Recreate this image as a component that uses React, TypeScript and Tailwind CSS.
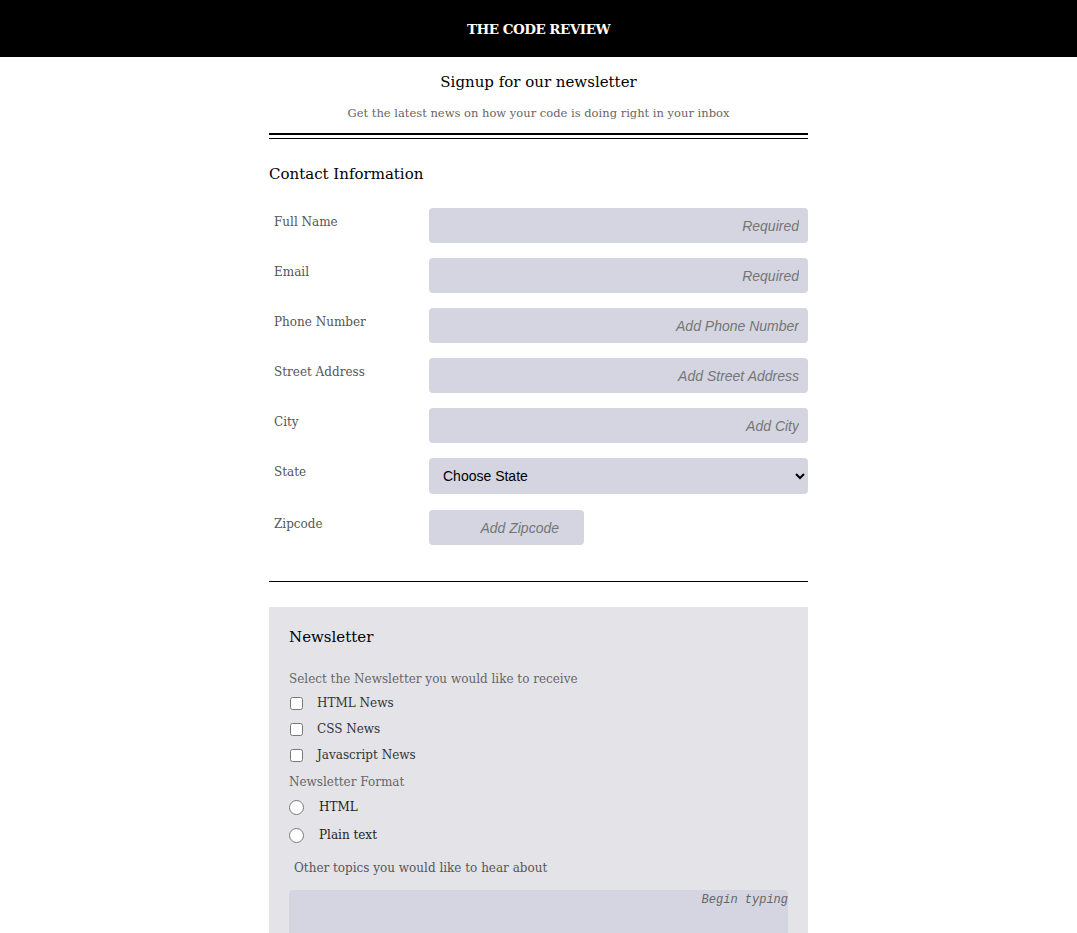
import React from 'react';

const fields = [
  { label: 'Full Name', placeholder: 'Required', type: 'text' },
  { label: 'Email', placeholder: 'Required', type: 'email' },
  { label: 'Phone Number', placeholder: 'Add Phone Number', type: 'tel' },
  { label: 'Street Address', placeholder: 'Add Street Address', type: 'text' },
  { label: 'City', placeholder: 'Add City', type: 'text' },
];

export default function App() {
  return (
    <div className="min-h-screen bg-white font-['DejaVu_Serif',serif]">
      <header className="h-[57px] bg-black flex items-center justify-center pt-[2px]">
        <h1 className="text-white text-[13.5px] font-bold tracking-[-0.5px]">THE CODE REVIEW</h1>
      </header>

      <main className="w-[539px] mx-auto">
        <div className="text-center pt-[14px]">
          <h2 className="text-[15px] text-black leading-[22px]">Signup for our newsletter</h2>
          <p className="text-[11.5px] text-[#666] mt-[12px] leading-[16px]">
            Get the latest news on how your code is doing right in your inbox
          </p>
        </div>
        <div className="mt-[12px] h-[2px] bg-black" />
        <div className="mt-[3px] h-px bg-black" />

        <form>
          <h3 className="text-[15px] text-black mt-[24px] leading-[22px]">Contact Information</h3>

          <div className="mt-[23px] flex flex-col gap-[15px]">
            {fields.map((f) => (
              <div key={f.label} className="flex">
                <label className="w-[160px] pl-[5px] pt-[5px] text-[12px] text-[#555]">{f.label}</label>
                <input
                  type={f.type}
                  placeholder={f.placeholder}
                  className="w-[379px] h-[35px] rounded bg-[#d4d5e1] pr-[9px] text-right text-[14px] font-['Liberation_Sans',sans-serif] placeholder:italic placeholder:text-[#757575] outline-none"
                />
              </div>
            ))}
            <div className="flex">
              <label className="w-[160px] pl-[5px] pt-[5px] text-[12px] text-[#555]">State</label>
              <select className="w-[379px] h-[36px] rounded bg-[#d4d5e1] pl-[10px] pr-[4px] text-[14px] text-black font-['Liberation_Sans',sans-serif] outline-none">
                <option>Choose State</option>
                <option>Alabama</option>
                <option>Alaska</option>
                <option>Arizona</option>
              </select>
            </div>
            <div className="flex mt-px">
              <label className="w-[160px] pl-[5px] pt-[5px] text-[12px] text-[#555]">Zipcode</label>
              <input
                type="text"
                placeholder="Add Zipcode"
                className="w-[155px] h-[35px] rounded bg-[#d4d5e1] pr-[25px] text-right text-[14px] font-['Liberation_Sans',sans-serif] placeholder:italic placeholder:text-[#757575] outline-none"
              />
            </div>
          </div>

          <div className="mt-[36px] h-px bg-black" />

          <section className="mt-[25px] bg-[#e4e3e8] px-[20px] pt-[19px] pb-[20px]">
            <h3 className="text-[15px] text-black leading-[22px]">Newsletter</h3>
            <p className="mt-[23px] text-[12px] text-[#666] leading-[16px]">Select the Newsletter you would like to receive</p>
            <div className="mt-[3px] flex flex-col">
              {['HTML News', 'CSS News', 'Javascript News'].map((n) => (
                <label key={n} className="flex items-center h-[26px] text-[12px] text-[#333]">
                  <input type="checkbox" className="w-[13px] h-[13px] ml-px mr-[14px]" />
                  {n}
                </label>
              ))}
            </div>
            <p className="mt-[6px] text-[12px] text-[#666] leading-[16px]">Newsletter Format</p>
            <div className="mt-[3px] flex flex-col">
              {['HTML', 'Plain text'].map((n) => (
                <label key={n} className="flex items-center h-[28px] text-[12px] text-[#222]">
                  <input type="radio" name="format" className="w-[15px] h-[15px] mr-[15px]" />
                  {n}
                </label>
              ))}
            </div>
            <p className="mt-[11px] pl-[5px] text-[12px] text-[#555] leading-[16px]">Other topics you would like to hear about</p>
            <textarea
              placeholder="Begin typing"
              className="mt-[14px] block w-full h-[110px] rounded bg-[#d4d5e1] text-right text-[12px] font-['Liberation_Mono',monospace] placeholder:italic placeholder:text-[#666] outline-none resize-none pt-[1px]"
            />
          </section>
        </form>
      </main>
    </div>
  );
}
